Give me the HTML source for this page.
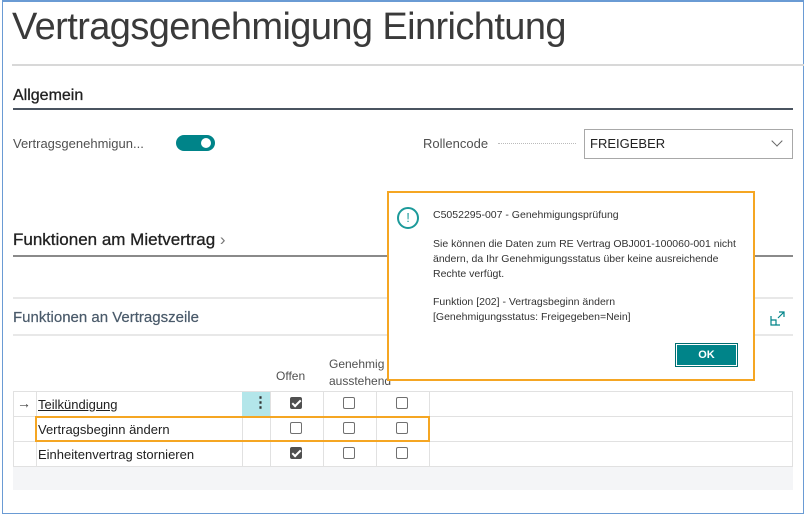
<!DOCTYPE html>
<html><head><meta charset="utf-8"><style>
*{margin:0;padding:0;box-sizing:border-box}
body{width:806px;height:515px;background:#fff;font-family:"Liberation Sans",sans-serif;color:#212121;position:relative;overflow:hidden}
.a{position:absolute;white-space:nowrap}
.cb{position:absolute;width:12px;height:12px;border:1px solid #707070;border-radius:2px;background:#fff}
.ck{background:#505050;border-color:#505050}
.ck:after{content:"";position:absolute;left:3px;top:0px;width:3px;height:7px;border:solid #fff;border-width:0 2px 2px 0;transform:rotate(45deg)}
.hl{position:absolute;background:#e1e1e1;height:1px}
.vl{position:absolute;background:#e1e1e1;width:1px}
</style></head><body>
<div class="a" style="left:2px;top:0;width:802px;height:514px;border:1px solid #6a9bd4;border-top:2px solid #6a9bd4"></div>
<div class="a" style="left:12px;top:6px;font-size:38px;color:#3a3a3a;letter-spacing:-0.6px">Vertragsgenehmigung Einrichtung</div>
<div class="a" style="left:12px;top:64px;width:792px;height:2px;background:#d8d8d8"></div>
<div class="a" style="left:13px;top:87px;font-size:16px;color:#212121;-webkit-text-stroke:0.3px #212121">Allgemein</div>
<div class="a" style="left:13px;top:108px;width:780px;height:2px;background:#4a5460"></div>
<div class="a" style="left:13px;top:136px;font-size:13px;color:#505050">Vertragsgenehmigun...</div>
<div class="a" style="left:176px;top:135px;width:39px;height:16px;border-radius:8px;background:#008489"></div>
<div class="a" style="left:201px;top:138px;width:10px;height:10px;border-radius:5px;background:#fff"></div>
<div class="a" style="left:423px;top:136px;font-size:13px;color:#505050">Rollencode</div>
<div class="a" style="left:498px;top:143px;width:78px;border-top:1px dotted #bbb"></div>
<div class="a" style="left:584px;top:129px;width:209px;height:30px;border:1px solid #a8a8a8"></div>
<div class="a" style="left:590px;top:136px;font-size:13px;color:#212121">FREIGEBER</div>
<div class="a" style="left:773px;top:137px;width:8px;height:8px;border-right:1px solid #666;border-bottom:1px solid #666;transform:rotate(45deg)"></div>
<div class="a" style="left:13px;top:230px;font-size:17px;color:#212121;-webkit-text-stroke:0.3px #212121">Funktionen am Mietvertrag<span style="color:#777;-webkit-text-stroke:0"> &#x203A;</span></div>
<div class="a" style="left:13px;top:255px;width:780px;height:2px;background:#8a8a8a"></div>
<div class="a" style="left:13px;top:297px;width:780px;height:2px;background:#e8e8e8"></div>
<div class="a" style="left:13px;top:309px;font-size:15px;color:#4a5a6a;-webkit-text-stroke:0.2px #4a5a6a">Funktionen an Vertragszeile</div>
<div class="a" style="left:13px;top:334px;width:780px;height:2px;background:#e8e8e8"></div>
<svg class="a" style="left:770px;top:310px" width="16" height="16" viewBox="0 0 16 16"><path d="M1 6v9h9M1 10h5v5M9 2h5v5M14 2l-6 6" fill="none" stroke="#008489" stroke-width="1.2"/></svg>
<div class="a" style="left:276px;top:369px;font-size:12px;color:#505050">Offen</div>
<div class="a" style="left:329px;top:356px;font-size:12px;color:#505050;line-height:17px">Genehmig<br>ausstehend</div>
<div class="a" style="left:13px;top:466px;width:780px;height:24px;background:#f4f5f7"></div>
<div class="hl" style="left:13px;top:391px;width:780px"></div>
<div class="hl" style="left:13px;top:416px;width:780px"></div>
<div class="hl" style="left:13px;top:441px;width:780px"></div>
<div class="hl" style="left:13px;top:466px;width:780px"></div>
<div class="vl" style="left:13px;top:391px;height:75px"></div>
<div class="vl" style="left:36px;top:391px;height:75px"></div>
<div class="vl" style="left:242px;top:391px;height:75px"></div>
<div class="vl" style="left:270px;top:391px;height:75px"></div>
<div class="vl" style="left:323px;top:391px;height:75px"></div>
<div class="vl" style="left:376px;top:391px;height:75px"></div>
<div class="vl" style="left:429px;top:391px;height:75px"></div>
<div class="vl" style="left:792px;top:391px;height:75px"></div>
<div class="a" style="left:242px;top:392px;width:28px;height:24px;background:#b3e6ea"></div>
<div class="a" style="left:253px;top:393px;font-size:15px;color:#333;font-weight:bold">&#8942;</div>
<div class="a" style="left:17px;top:395px;font-size:14px;color:#444">&#8594;</div>
<div class="a" style="left:38px;top:397px;font-size:13px;text-decoration:underline">Teilkündigung</div>
<div class="a" style="left:38px;top:422px;font-size:13px">Vertragsbeginn ändern</div>
<div class="a" style="left:38px;top:447px;font-size:13px">Einheitenvertrag stornieren</div>
<div class="cb ck" style="left:290px;top:397px"></div><div class="cb" style="left:343px;top:397px"></div><div class="cb" style="left:396px;top:397px"></div>
<div class="cb" style="left:290px;top:422px"></div><div class="cb" style="left:343px;top:422px"></div><div class="cb" style="left:396px;top:422px"></div>
<div class="cb ck" style="left:290px;top:447px"></div><div class="cb" style="left:343px;top:447px"></div><div class="cb" style="left:396px;top:447px"></div>
<div class="a" style="left:35px;top:416px;width:395px;height:26px;border:2px solid #f5a623"></div>
<div class="a" style="left:387px;top:191px;width:368px;height:190px;background:#fff;border:2px solid #f5a623"></div>
<div class="a" style="left:397px;top:207px;width:22px;height:22px;border:2px solid #1c9a9a;border-radius:50%;color:#1c9a9a;font-size:13px;text-align:center;line-height:18px">!</div>
<div class="a" style="left:433px;top:209px;font-size:10.5px;color:#333">C5052295-007 - Genehmigungsprüfung</div>
<div class="a" style="left:433px;top:237px;font-size:10.5px;color:#333;line-height:15px">Sie können die Daten zum RE Vertrag OBJ001-100060-001 nicht<br>ändern, da Ihr Genehmigungsstatus über keine ausreichende<br>Rechte verfügt.</div>
<div class="a" style="left:433px;top:295px;font-size:10.5px;color:#333;line-height:15px">Funktion [202] - Vertragsbeginn ändern<br>[Genehmigungsstatus: Freigegeben=Nein]</div>
<div class="a" style="left:675px;top:343px;width:63px;height:24px;background:#008489;border:1px solid #006d70;box-shadow:0 0 0 1px #fff inset;color:#fff;font-size:11px;font-weight:bold;text-align:center;line-height:22px">OK</div>
</body></html>
